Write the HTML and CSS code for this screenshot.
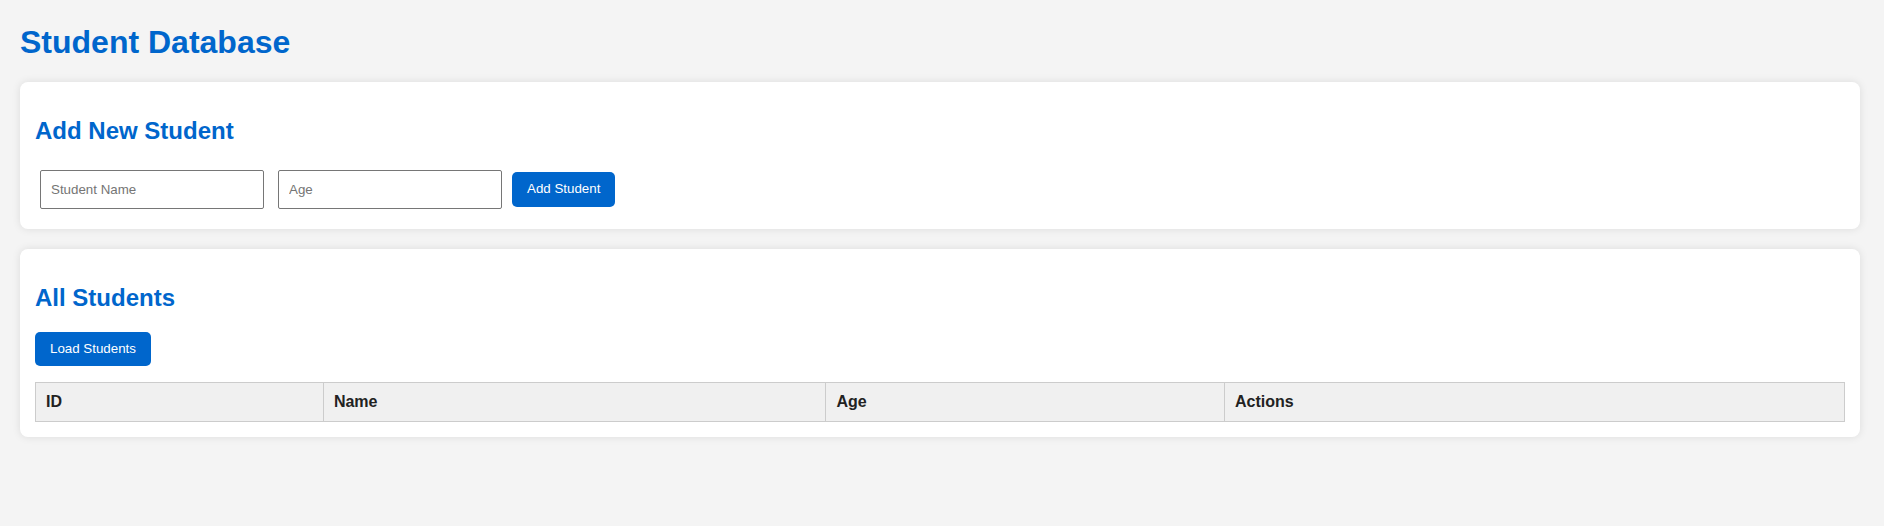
FILE: index.html
```html
<!DOCTYPE html>
<html lang="en">
<head>
<meta charset="utf-8">
<title>Student Database</title>
<link rel="stylesheet" href="styles.css">
</head>
<body>
<div class="page">
  <h1 class="page-title">Student Database</h1>

  <section class="card">
    <h2 class="card-title">Add New Student</h2>
    <form class="form-row">
      <input class="field" type="text" placeholder="Student Name">
      <input class="field" type="number" placeholder="Age">
      <button class="btn btn-add" type="button">Add Student</button>
    </form>
  </section>

  <section class="card">
    <h2 class="card-title">All Students</h2>
    <div class="toolbar">
      <button class="btn" type="button">Load Students</button>
    </div>
    <table class="student-table">
      <thead>
        <tr>
          <th>ID</th>
          <th>Name</th>
          <th>Age</th>
          <th>Actions</th>
        </tr>
      </thead>
      <tbody></tbody>
    </table>
  </section>
</div>
</body>
</html>
```

FILE: styles.css
```css
html, body {
  margin: 0;
  padding: 0;
}

body {
  background: #f4f4f4;
  font-family: "Liberation Sans", Arial, sans-serif;
  color: #333;
}

.page {
  padding: 2px 24px 20px 20px;
}

.page-title {
  font-size: 32px;
  font-weight: bold;
  color: #0066cc;
  margin: 21.5px 0 21.5px 0;
  line-height: 37px;
}

.card {
  background: #fff;
  border-radius: 8px;
  padding: 15px;
  margin-bottom: 20px;
  box-shadow: 0 0 8px rgba(0, 0, 0, 0.1);
}

.card-title {
  font-size: 24px;
  font-weight: bold;
  color: #0066cc;
  margin: 20px 0;
  line-height: 28px;
}

.form-row {
  display: flex;
  align-items: center;
  margin: 0;
}

.field {
  box-sizing: border-box;
  width: 224px;
  height: 39px;
  margin: 5px 9px 5px 5px;
  padding: 10px;
  border: 1px solid #767676;
  border-radius: 2px;
  font-family: "Liberation Sans", Arial, sans-serif;
  font-size: 13.33px;
  color: #333;
  background: #fff;
  -moz-appearance: textfield;
}

.field::-webkit-outer-spin-button,
.field::-webkit-inner-spin-button {
  -webkit-appearance: none;
  margin: 0;
}

.field::placeholder {
  color: #757575;
}

.btn {
  background: #0066cc;
  color: #fff;
  border: none;
  border-radius: 5px;
  padding: 10px 15px;
  font-family: "Liberation Sans", Arial, sans-serif;
  font-size: 13.33px;
  line-height: 14.4px;
  cursor: pointer;
}

.btn-add {
  margin-left: 1px;
}

.toolbar {
  display: flex;
  margin-bottom: 16px;
}

.student-table {
  width: 100%;
  border-collapse: collapse;
}

.student-table th {
  background: #f0f0f0;
  border: 1px solid #ccc;
  padding: 10px;
  text-align: left;
  font-size: 16px;
  font-weight: bold;
  color: #222;
  line-height: 18px;
}
```
